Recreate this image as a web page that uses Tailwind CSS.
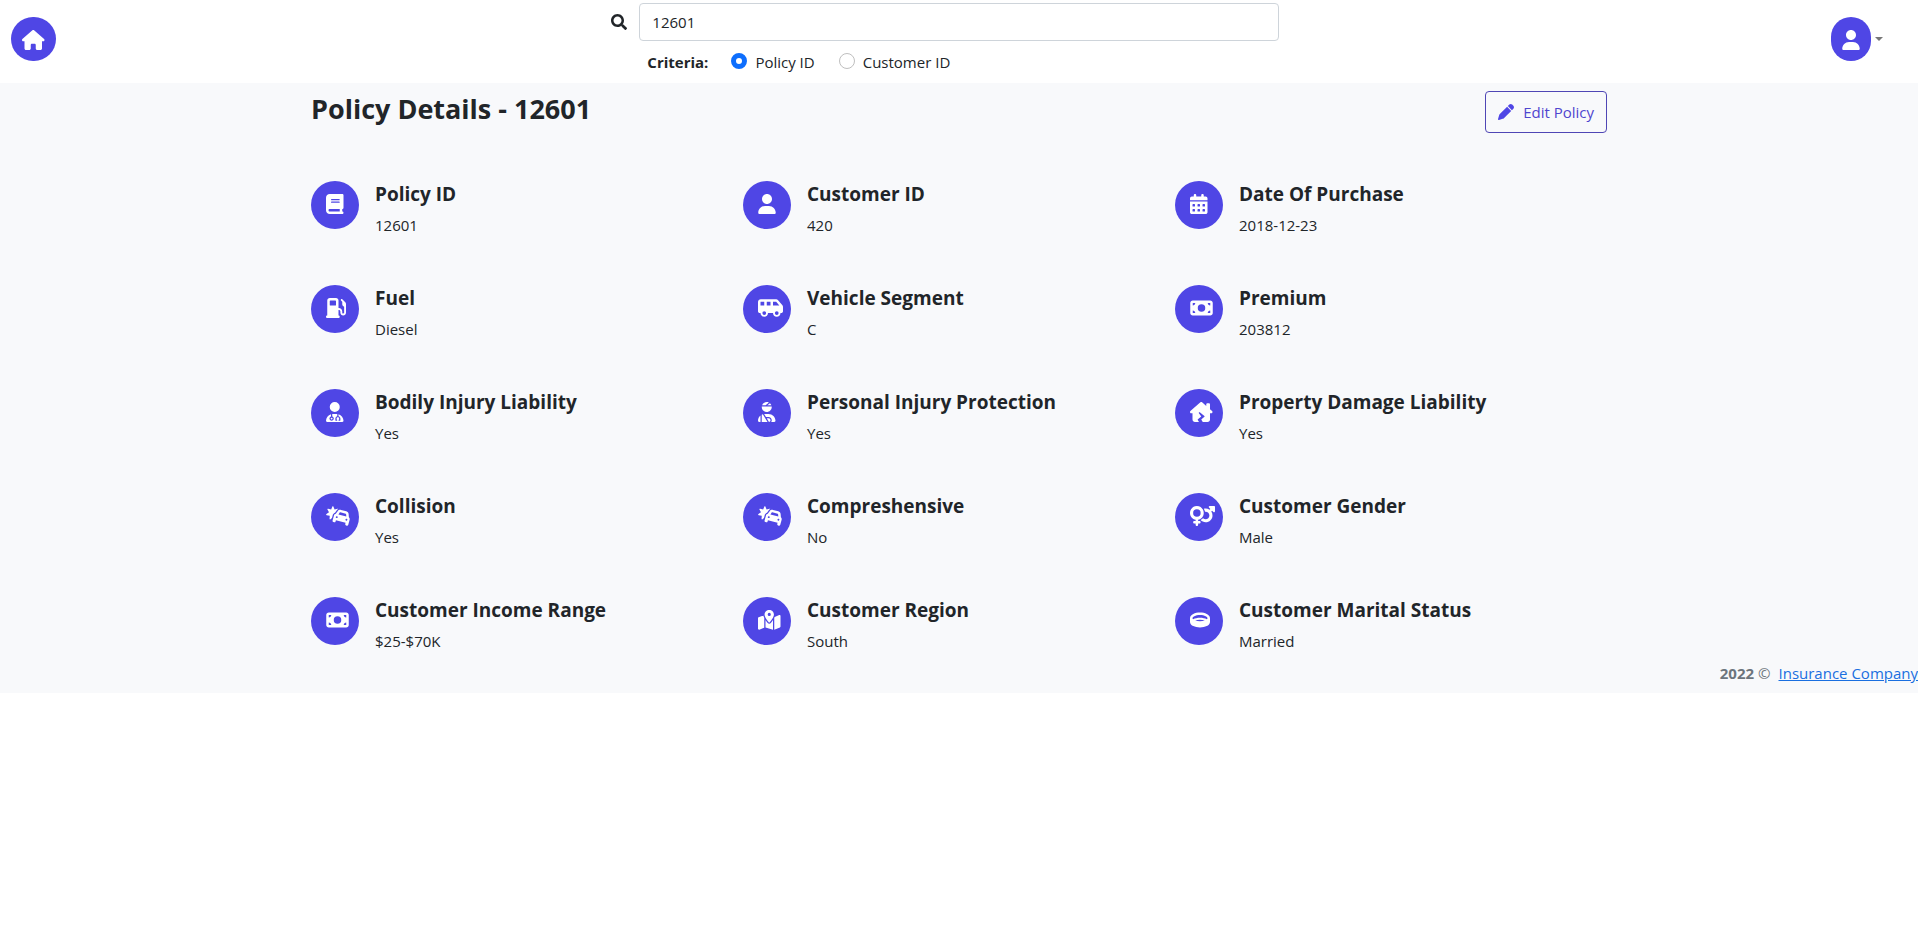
<!DOCTYPE html>
<html lang="en">
<head>
<meta charset="utf-8">
<meta name="viewport" content="width=device-width, initial-scale=1">
<title>Policy Details</title>
<script src="https://cdn.jsdelivr.net/npm/@tailwindcss/browser@4"></script>
</head>
<body class="bg-white font-['Open_Sans','Noto_Sans',sans-serif] text-[15px] leading-6 text-[#212529]">

<svg class="hidden" aria-hidden="true">
  <symbol id="user" viewBox="0 0 448 512"><path d="M224 256c70.7 0 128-57.31 128-128s-57.3-128-128-128C153.3 0 96 57.31 96 128S153.3 256 224 256zM274.7 304H173.3C77.61 304 0 381.6 0 477.3c0 19.14 15.52 34.67 34.66 34.67h378.7C432.5 512 448 496.5 448 477.3C448 381.6 370.4 304 274.7 304z"/></symbol>
  <symbol id="money" viewBox="0 0 576 512"><path d="M64 64C28.7 64 0 92.7 0 128V384c0 35.3 28.7 64 64 64H512c35.3 0 64-28.7 64-64V128c0-35.3-28.7-64-64-64H64zm64 320H64V320c35.3 0 64 28.7 64 64zM64 192V128h64c0 35.3-28.7 64-64 64zM448 384c0-35.3 28.7-64 64-64v64H448zm64-192c-35.3 0-64-28.7-64-64h64v64zM288 160a96 96 0 1 1 0 192 96 96 0 1 1 0-192z" fill-rule="evenodd"/></symbol>
  <symbol id="car-burst" viewBox="0 0 640 512"><path fill-rule="evenodd" d="M176 8c-6.6 0-12.4 4-14.9 10.1l-29.4 74L55.6 68.9c-6.3-1.9-13.1 .2-17.2 5.3s-4.6 12.2-1.4 17.9l39.5 69.1L10.9 206.4c-5.4 3.7-8 10.3-6.5 16.7s6.7 11.2 13.1 12.2l78.7 12.2L90.6 327c-.5 6.5 3.1 12.7 9 15.5s12.9 1.8 17.8-2.6l35.3-32.5 9.5-35.4 10.4-38.6c8-29.9 30.5-52.1 57.9-60.9l41-59.2c11.3-16.3 26.4-28.9 43.5-37.2c-.4-.6-.8-1.2-1.3-1.8c-4.1-5.1-10.9-7.2-17.2-5.3L220.3 92.1l-29.4-74C188.4 12 182.6 8 176 8zM367.7 161.5l135.6 36.3c6.5 1.8 11.3 7.4 11.8 14.2l4.6 56.5-201.5-54 32.2-46.6c3.8-5.6 10.8-8.1 17.3-6.4zm-69.9-30l-47.9 69.3c-21.6 3-40.3 18.6-46.3 41l-10.4 38.6-16.6 61.8-8.3 30.9c-4.6 17.1 5.6 34.6 22.6 39.2l15.5 4.1c17.1 4.6 34.6-5.6 39.2-22.6l8.3-30.9 247.3 66.3-8.3 30.9c-4.6 17.1 5.6 34.6 22.6 39.2l15.5 4.1c17.1 4.6 34.6-5.6 39.2-22.6l8.3-30.9L595 388l10.4-38.6c6-22.4-2.5-45.2-19.6-58.7l-6.8-84c-2.7-33.7-26.4-62-59-70.8L384.2 99.7c-32.7-8.8-67.3 4-86.5 31.8zm-17 131a24 24 0 1 1 -12.4 46.4 24 24 0 1 1 12.4-46.4zm217.9 83.2A24 24 0 1 1 545 358.1a24 24 0 1 1 -46.4-12.4z"/></symbol>
</svg>

<header class="grid grid-cols-3 bg-white pb-[9px]">
  <div class="flex items-start justify-between pr-3 pl-[11px]">
    <a href="#" aria-label="Home" class="mt-[17px] flex h-11 w-[45px] items-center justify-center rounded-full bg-[#4f46e5] pt-0.5 text-white">
      <svg class="h-5" viewBox="0 0 576 512" fill="currentColor"><path d="M575.8 255.5c0 18-15 32.1-32 32.1h-32l.7 160.2c0 2.7-.2 5.4-.5 8.1V472c0 22.1-17.9 40-40 40H456c-1.1 0-2.2 0-3.3-.1c-1.4 .1-2.8 .1-4.2 .1H416 392c-22.1 0-40-17.9-40-40V448 384c0-17.7-14.3-32-32-32H256c-17.7 0-32 14.3-32 32v64 24c0 22.1-17.9 40-40 40H160 128.1c-1.5 0-3-.1-4.5-.2c-1.2 .1-2.4 .2-3.6 .2H104c-22.1 0-40-17.9-40-40V360c0-.9 0-1.9 .1-2.8V287.6H32c-18 0-32-14-32-32.1c0-9 3-17 10-24L266.4 8c7-7 15-8 22-8s15 2 21 7L564.8 231.5c8 7 12 15 11 24z"/></svg>
    </a>
    <svg class="mt-[14px] h-4 w-4" viewBox="0 0 512 512" fill="currentColor" aria-hidden="true"><path fill-rule="evenodd" d="M505 442.7L405.3 343c-4.5-4.5-10.6-7-17-7H372c27.6-35.3 44-79.7 44-128C416 93.1 322.9 0 208 0S0 93.1 0 208s93.1 208 208 208c48.3 0 92.7-16.4 128-44v16.3c0 6.4 2.5 12.5 7 17l99.7 99.7c9.4 9.4 24.6 9.4 33.9 0l28.3-28.3c9.4-9.4 9.4-24.6.1-34zM208 336c-70.7 0-128-57.2-128-128 0-70.7 57.2-128 128-128 70.7 0 128 57.2 128 128 0 70.7-57.2 128-128 128z"/></svg>
  </div>
  <form class="pt-[3px]">
    <input type="text" value="12601" aria-label="Search policies" class="block h-[38px] w-full rounded border border-[#ced4da] bg-white px-3">
    <fieldset class="mt-[9px] flex items-center pl-2">
      <legend class="float-left font-bold">Criteria:</legend>
      <input id="by-policy" type="radio" name="criteria" checked class="mb-0.5 ml-[23px] h-4 w-4 appearance-none rounded-full border border-[#bfbfbf] bg-white checked:border-5 checked:border-[#0d6efd]">
      <label for="by-policy" class="ml-2">Policy ID</label>
      <input id="by-customer" type="radio" name="criteria" class="mb-0.5 ml-6 h-4 w-4 appearance-none rounded-full border border-[#bfbfbf] bg-white checked:border-5 checked:border-[#0d6efd]">
      <label for="by-customer" class="ml-2">Customer ID</label>
    </fieldset>
  </form>
  <div class="flex items-start justify-end pr-[35px]">
    <button type="button" aria-label="Account menu" class="mt-[17px] flex items-center gap-1">
      <span class="flex h-11 w-10 items-center justify-center rounded-full bg-[#4f46e5] pt-0.5 text-white"><svg class="h-5 w-[18px]" fill="currentColor"><use href="#user"/></svg></span>
      <svg class="h-1 w-2" viewBox="0 0 8 4" fill="#777"><path d="M0 0h8L4 4z"/></svg>
    </button>
  </div>
</header>

<div class="bg-[#f8f9fb] pt-2 pb-2">
  <main class="mx-auto max-w-[1320px] px-3">
    <div class="flex items-start justify-between">
      <h1 class="text-[27px] leading-9 font-bold">Policy Details - 12601</h1>
      <button type="button" class="flex h-[42px] items-center gap-[9px] rounded border border-[#4f46b5] px-3 text-[#4f46cf]">
        <svg class="h-4 w-4" viewBox="0 0 512 512" fill="#4f46e5" aria-hidden="true"><path d="M421.7 220.3L188.5 453.4c-10.4 10.4-23.3 18.1-37.4 22.2L30.8 511C22.4 513.4 13.3 511 7.03 504.1C.8198 498.7-1.502 489.6 .9746 481.2L36.37 360.9C40.53 346.8 48.16 333.9 58.57 323.5L291.7 90.34L421.7 220.3zM492.7 58.75C517.7 83.74 517.7 124.3 492.7 149.3L444.3 197.7L314.3 67.72L362.7 19.32C387.7-5.678 428.3-5.678 453.3 19.32L492.7 58.75z"/></svg>
        Edit Policy
      </button>
    </div>

    <div class="mt-12 grid grid-cols-3 gap-y-12">
      <div class="flex gap-4">
        <span class="h-12 w-12 shrink-0 rounded-full bg-[#4f46e5] pt-[13px] pl-[15px] text-white"><svg class="h-5" viewBox="0 0 448 512" fill="currentColor"><path fill-rule="evenodd" d="M96 0C43 0 0 43 0 96V416c0 53 43 96 96 96H384h32c17.7 0 32-14.3 32-32s-14.3-32-32-32V384c17.7 0 32-14.3 32-32V32c0-17.7-14.3-32-32-32H384 96zm0 384H352v64H96c-17.7 0-32-14.3-32-32s14.3-32 32-32zm32-240c0-8.8 7.2-16 16-16H336c8.8 0 16 7.2 16 16s-7.2 16-16 16H144c-8.8 0-16-7.2-16-16zm16 48H336c8.8 0 16 7.2 16 16s-7.2 16-16 16H144c-8.8 0-16-7.2-16-16s7.2-16 16-16z"/></svg></span>
        <div><h2 class="mb-1.5 text-[19px] leading-[26px] font-bold">Policy ID</h2><p>12601</p></div>
      </div>
      <div class="flex gap-4">
        <span class="h-12 w-12 shrink-0 rounded-full bg-[#4f46e5] pt-[13px] pl-[15px] text-white"><svg class="h-5 w-[18px]" fill="currentColor"><use href="#user"/></svg></span>
        <div><h2 class="mb-1.5 text-[19px] leading-[26px] font-bold">Customer ID</h2><p>420</p></div>
      </div>
      <div class="flex gap-4">
        <span class="h-12 w-12 shrink-0 rounded-full bg-[#4f46e5] pt-[13px] pl-[15px] text-white"><svg class="h-5" viewBox="0 0 448 512" fill="currentColor"><path fill-rule="evenodd" d="M128 0c17.7 0 32 14.3 32 32V64H288V32c0-17.7 14.3-32 32-32s32 14.3 32 32V64h48c26.5 0 48 21.5 48 48v48H0V112C0 85.5 21.5 64 48 64H96V32c0-17.7 14.3-32 32-32zM0 192H448V464c0 26.5-21.5 48-48 48H48c-26.5 0-48-21.5-48-48V192zM80 256q-16 0-16 16v32q0 16 16 16h32q16 0 16-16v-32q0-16-16-16zM208 256q-16 0-16 16v32q0 16 16 16h32q16 0 16-16v-32q0-16-16-16zM336 256q-16 0-16 16v32q0 16 16 16h32q16 0 16-16v-32q0-16-16-16zM80 384q-16 0-16 16v32q0 16 16 16h32q16 0 16-16v-32q0-16-16-16zM208 384q-16 0-16 16v32q0 16 16 16h32q16 0 16-16v-32q0-16-16-16zM336 384q-16 0-16 16v32q0 16 16 16h32q16 0 16-16v-32q0-16-16-16z"/></svg></span>
        <div><h2 class="mb-1.5 text-[19px] leading-[26px] font-bold">Date Of Purchase</h2><p>2018-12-23</p></div>
      </div>

      <div class="flex gap-4">
        <span class="h-12 w-12 shrink-0 rounded-full bg-[#4f46e5] pt-[13px] pl-[15px] text-white"><svg class="h-5" viewBox="0 0 512 512" fill="currentColor"><path fill-rule="evenodd" d="M32 64C32 28.7 60.7 0 96 0H256c35.3 0 64 28.7 64 64V256h8c48.6 0 88 39.4 88 88v32c0 13.3 10.7 24 24 24s24-10.7 24-24V222c-27.6-7.1-48-32.2-48-62V96L384 64c-8.8-8.8-8.8-23.2 0-32s23.2-8.8 32 0l77.3 77.3c12 12 18.7 28.3 18.7 45.3V168v24 32V376c0 39.8-32.2 72-72 72s-72-32.2-72-72V344c0-22.1-17.9-40-40-40h-8V448c17.7 0 32 14.3 32 32s-14.3 32-32 32H32c-17.7 0-32-14.3-32-32s14.3-32 32-32V64zM96 80v96c0 8.8 7.2 16 16 16H240c8.8 0 16-7.2 16-16V80c0-8.8-7.2-16-16-16H112c-8.8 0-16 7.2-16 16z"/></svg></span>
        <div><h2 class="mb-1.5 text-[19px] leading-[26px] font-bold">Fuel</h2><p>Diesel</p></div>
      </div>
      <div class="flex gap-4">
        <span class="h-12 w-12 shrink-0 rounded-full bg-[#4f46e5] pt-[13px] pl-[15px] text-white"><svg class="h-5" viewBox="0 0 640 512" fill="currentColor"><path fill-rule="evenodd" d="M64 104v88h96V96H72c-4.4 0-8 3.6-8 8zm482 88L465.1 96H384v96H546zm-226 0V96H224v96h96zM592 384H576c0 53-43 96-96 96s-96-43-96-96H256c0 53-43 96-96 96s-96-43-96-96H48c-26.5 0-48-21.5-48-48V104C0 64.2 32.2 32 72 32H192 352 465.1c18.9 0 36.8 8.3 49 22.8L625 186.5c9.7 11.5 15 26.1 15 41.2V336c0 26.5-21.5 48-48 48zm-64 0a48 48 0 1 0 -96 0 48 48 0 1 0 96 0zM160 432a48 48 0 1 0 0-96 48 48 0 1 0 0 96z"/></svg></span>
        <div><h2 class="mb-1.5 text-[19px] leading-[26px] font-bold">Vehicle Segment</h2><p>C</p></div>
      </div>
      <div class="flex gap-4">
        <span class="h-12 w-12 shrink-0 rounded-full bg-[#4f46e5] pt-[13px] pl-[15px] text-white"><svg class="h-5 w-[23px]" fill="currentColor"><use href="#money"/></svg></span>
        <div><h2 class="mb-1.5 text-[19px] leading-[26px] font-bold">Premium</h2><p>203812</p></div>
      </div>

      <div class="flex gap-4">
        <span class="h-12 w-12 shrink-0 rounded-full bg-[#4f46e5] pt-[13px] pl-[15px] text-white"><svg class="h-5" viewBox="0 0 448 512" fill="currentColor"><path d="M224 256A128 128 0 1 0 224 0a128 128 0 1 0 0 256zm-96 55.2C54 332.9 0 401.3 0 482.3C0 498.7 13.3 512 29.7 512H418.3c16.4 0 29.7-13.3 29.7-29.7c0-81-54-149.4-128-171.1V362c27.6 7.1 48 32.2 48 62v40c0 8.8-7.2 16-16 16H336c-8.8 0-16-7.2-16-16s7.2-16 16-16V424c0-17.7-14.3-32-32-32s-32 14.3-32 32v24c8.8 0 16 7.2 16 16s-7.2 16-16 16H256c-8.8 0-16-7.2-16-16V424c0-29.8 20.4-54.9 48-62V304.9c-6-.6-12.1-.9-18.3-.9H178.3c-6.2 0-12.3 .3-18.3 .9v65.4c23.1 6.9 40 28.3 40 53.7c0 30.9-25.1 56-56 56s-56-25.1-56-56c0-25.4 16.9-46.8 40-53.7V311.2zM144 448a24 24 0 1 0 0-48 24 24 0 1 0 0 48z"/></svg></span>
        <div><h2 class="mb-1.5 text-[19px] leading-[26px] font-bold">Bodily Injury Liability</h2><p>Yes</p></div>
      </div>
      <div class="flex gap-4">
        <span class="h-12 w-12 shrink-0 rounded-full bg-[#4f46e5] pt-[13px] pl-[15px] text-white"><svg class="h-5" viewBox="0 0 448 512" fill="currentColor"><path d="M240 80H342.7c-7.9-19.5-20.4-36.5-36.2-49.9L240 80zm37.7-68.2C261.3 4.2 243.2 0 224 0c-53.7 0-99.3 33.1-118.4 80h89.4l82.7-68.2zM224 256c70.7 0 128-57.3 128-128c0-5.4-.3-10.8-1-16H97c-.7 5.2-1 10.6-1 16c0 70.7 57.3 128 128 128zM124 312.4c-9.7 3.1-19.1 7-28 11.7V512H243.7L181.5 408.6 124 312.4zm33-7.2L204.3 384H272c44.2 0 80 35.8 80 80c0 18-6 34.6-16 48h82.3c16.4 0 29.7-13.3 29.7-29.7C448 383.8 368.2 304 269.7 304H178.3c-7.2 0-14.3 .4-21.3 1.3zM0 482.3C0 498.7 13.3 512 29.7 512H64V345.4C24.9 378.1 0 427.3 0 482.3zM320 464c0-26.5-21.5-48-48-48H223.5l57.1 95c23-4.2 39.4-24 39.4-47z"/></svg></span>
        <div><h2 class="mb-1.5 text-[19px] leading-[26px] font-bold">Personal Injury Protection</h2><p>Yes</p></div>
      </div>
      <div class="flex gap-4">
        <span class="h-12 w-12 shrink-0 rounded-full bg-[#4f46e5] pt-[13px] pl-[15px] text-white"><svg class="h-5" viewBox="0 0 576 512" fill="currentColor"><path d="M543.8 287.6c17 0 32-14 32-32.1c1-9-3-17-11-24L512 185V64c0-17.7-14.3-32-32-32H448c-17.7 0-32 14.3-32 32v36.7L309.5 7c-6-5-14-7-21-7s-15 1-22 8L10 231.5c-7 7-10 15-10 24c0 18 14 32.1 32 32.1h32V448c0 35.3 28.7 64 64 64H230.4l-31.3-52.2c-4.1-6.8-2.6-15.5 3.5-20.5L288 368l-60.2-82.8c-10.9-15 8.2-33.5 22.8-22l117.9 92.6c8 6.3 8.2 18.4 .4 24.9L288 448l38.4 64H448.5c35.5 0 64.2-28.8 64-64.3l-.7-160.2h32z"/></svg></span>
        <div><h2 class="mb-1.5 text-[19px] leading-[26px] font-bold">Property Damage Liability</h2><p>Yes</p></div>
      </div>

      <div class="flex gap-4">
        <span class="h-12 w-12 shrink-0 rounded-full bg-[#4f46e5] pt-[13px] pl-[15px] text-white"><svg class="h-5 w-[25px]" fill="currentColor"><use href="#car-burst"/></svg></span>
        <div><h2 class="mb-1.5 text-[19px] leading-[26px] font-bold">Collision</h2><p>Yes</p></div>
      </div>
      <div class="flex gap-4">
        <span class="h-12 w-12 shrink-0 rounded-full bg-[#4f46e5] pt-[13px] pl-[15px] text-white"><svg class="h-5 w-[25px]" fill="currentColor"><use href="#car-burst"/></svg></span>
        <div><h2 class="mb-1.5 text-[19px] leading-[26px] font-bold">Compreshensive</h2><p>No</p></div>
      </div>
      <div class="flex gap-4">
        <span class="h-12 w-12 shrink-0 rounded-full bg-[#4f46e5] pt-[13px] pl-[15px] text-white"><svg class="h-5" viewBox="0 0 640 512" fill="currentColor"><path fill-rule="evenodd" d="M176 272a96 96 0 1 0 0-192 96 96 0 1 0 0 192zM352 176c0 86.3-62.1 158.1-144 173.1V384h32c17.7 0 32 14.3 32 32s-14.3 32-32 32H208v32c0 17.7-14.3 32-32 32s-32-14.3-32-32V448H112c-17.7 0-32-14.3-32-32s14.3-32 32-32h32V349.1C62.1 334.1 0 262.3 0 176C0 78.8 78.8 0 176 0s176 78.8 176 176zM271.9 360.6c19.3-10.1 36.9-23.1 52.1-38.4L336 311.6c17.1 15.2 39.4 24.4 64 24.4c53 0 96-43 96-96s-43-96-96-96c-5.8 0-11.4 .5-16.9 1.5C382 140 380.5 135 378.9 130c-4.9-21.5-13-41.7-24-60.2C369.3 66 384.4 64 400 64c37 0 71.4 11.4 99.8 31l20.6-20.6L487 41c-6.9-6.9-8.9-17.2-5.2-26.2S494.3 0 504 0H616c13.3 0 24 10.7 24 24V136c0 9.7-5.8 18.5-14.8 22.2s-19.3 1.7-26.2-5.2l-33.4-33.4L545 140.2c19.5 28.4 31 62.7 31 99.8c0 97.2-78.8 176-176 176c-50.5 0-96-21.3-128.1-55.4z"/></svg></span>
        <div><h2 class="mb-1.5 text-[19px] leading-[26px] font-bold">Customer Gender</h2><p>Male</p></div>
      </div>

      <div class="flex gap-4">
        <span class="h-12 w-12 shrink-0 rounded-full bg-[#4f46e5] pt-[13px] pl-[15px] text-white"><svg class="h-5 w-[23px]" fill="currentColor"><use href="#money"/></svg></span>
        <div><h2 class="mb-1.5 text-[19px] leading-[26px] font-bold">Customer Income Range</h2><p>$25-$70K</p></div>
      </div>
      <div class="flex gap-4">
        <span class="h-12 w-12 shrink-0 rounded-full bg-[#4f46e5] pt-[13px] pl-[15px] text-white"><svg class="h-5" viewBox="0 0 576 512" fill="currentColor"><path fill-rule="evenodd" d="M408 120c0 54.6-73.1 151.9-105.2 192c-7.7 9.6-22 9.6-29.6 0C241.1 271.9 168 174.6 168 120C168 53.7 221.7 0 288 0s120 53.7 120 120zm8 80.4c3.5-6.9 6.7-13.8 9.6-20.6c.5-1.2 1-2.5 1.5-3.7l116-46.4C558.9 123.4 576 135 576 152V422.8c0 9.8-6 18.6-15.1 22.3L416 503V200.4zM137.6 138.3c2.4 14.1 7.2 28.3 12.8 41.5c2.9 6.8 6.1 13.7 9.6 20.6V451.8L32.9 502.7C17.1 509 0 497.4 0 480.4V209.6c0-9.8 6-18.6 15.1-22.3l122.6-49zM327.8 332c13.9-17.4 35.7-45.7 56.2-77V504.3L192 449.4V255c20.5 31.3 42.3 59.6 56.2 77c20.5 25.6 59.1 25.6 79.6 0zM288 152a40 40 0 1 0 0-80 40 40 0 1 0 0 80z"/></svg></span>
        <div><h2 class="mb-1.5 text-[19px] leading-[26px] font-bold">Customer Region</h2><p>South</p></div>
      </div>
      <div class="flex gap-4">
        <span class="h-12 w-12 shrink-0 rounded-full bg-[#4f46e5] pt-[13px] pl-[15px] text-white"><svg class="h-5" viewBox="0 0 512 512" fill="currentColor"><path fill-rule="evenodd" d="M64 208c0 7.8 4.4 18.7 17.1 30.3C126.5 214.1 188.9 200 256 200s129.5 14.1 174.9 38.3C443.6 226.7 448 215.8 448 208c0-12.3-10.8-32-47.9-50.6C364.9 139.8 313.8 128 256 128s-108.9 11.8-144.1 29.4C74.8 176 64 195.7 64 208zm192 40c-47 0-89.3 7.6-122.9 19.7C166.3 280.2 208.8 288 256 288s89.7-7.8 122.9-20.3C345.3 255.6 303 248 256 248zM0 208c0-49.6 39.4-85.8 83.3-107.8C129.1 77.3 190.3 64 256 64s126.9 13.3 172.7 36.2c43.9 22 83.3 58.2 83.3 107.8v96c0 49.6-39.4 85.8-83.3 107.8C382.9 434.7 321.7 448 256 448s-126.9-13.3-172.7-36.2C39.4 389.8 0 353.6 0 304V208z"/></svg></span>
        <div><h2 class="mb-1.5 text-[19px] leading-[26px] font-bold">Customer Marital Status</h2><p>Married</p></div>
      </div>
    </div>
  </main>

  <footer class="mt-2 flex justify-end gap-2 text-[#6c757d]">
    <span><strong class="font-bold">2022</strong> ©</span>
    <a href="#" class="text-[#1a6fe0] underline">Insurance Company</a>
  </footer>
</div>
</body>
</html>
